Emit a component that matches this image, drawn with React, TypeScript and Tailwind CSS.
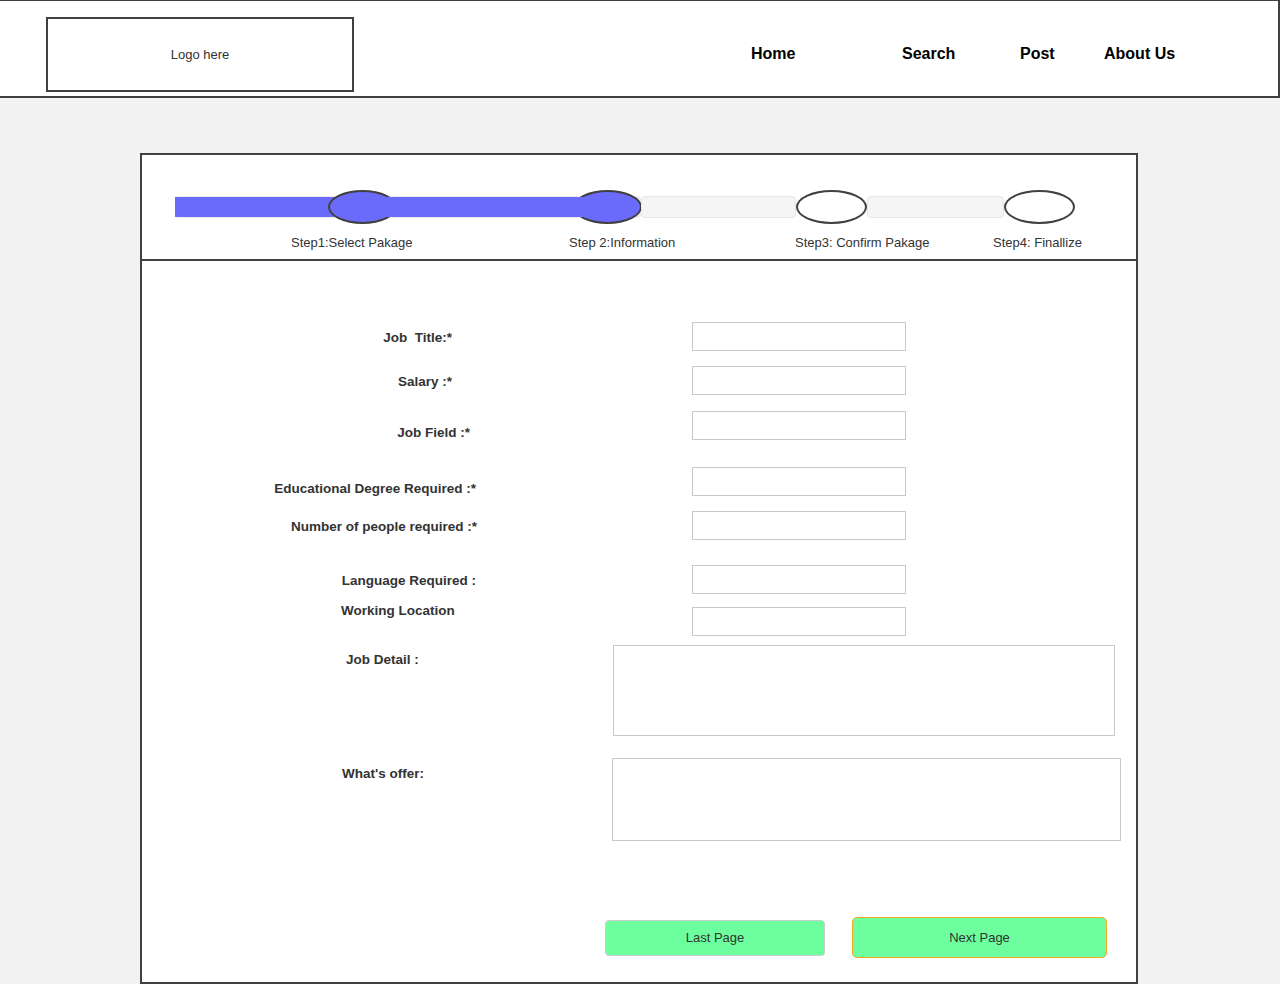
const font = "font-['Liberation_Sans',Arial,sans-serif]";

function InputRow({ top, pr, labelTop, label }: { top: string; pr: string; labelTop: string; label: string }) {
    return (
        <div className={`flex h-[29px] items-start ${top}`}>
            <div className={`w-[550px] shrink-0 text-right ${pr}`}>
                <span className={`block whitespace-pre text-[13.5px] font-bold leading-4 text-[#333] ${labelTop}`}>{label}</span>
            </div>
            <div className="h-[29px] w-[214px] border border-[#c8c8c8] bg-white" />
        </div>
    );
}

export default function App() {
    const steps = [
        { label: 'Step1:Select Pakage', w: 'w-[278px]' },
        { label: 'Step 2:Information', w: 'w-[226px]' },
        { label: 'Step3: Confirm Pakage', w: 'w-[198px]' },
        { label: 'Step4: Finallize', w: 'w-[140px]' },
    ];

    return (
        <div className={`h-[984px] w-[1280px] overflow-hidden bg-[#f2f2f2] ${font}`}>
            {/* Header */}
            <header className="flex h-[98px] items-start border-t border-r-2 border-b-2 border-[#404040] bg-white">
                <div className="mt-[16px] ml-[46px] flex h-[75px] w-[308px] items-center justify-center border-2 border-[#404040]">
                    <span className="text-[13px] text-[#333]">Logo here</span>
                </div>
                <nav className="mt-[44px] ml-[397px] flex items-start text-[16px] leading-[18px] font-bold text-black">
                    <a className="w-[151px]">Home</a>
                    <a className="w-[118px]">Search</a>
                    <a className="w-[84px]">Post</a>
                    <a>About Us</a>
                </nav>
            </header>

            {/* Card */}
            <div className="mt-[55px] ml-[140px] w-[998px] border-2 border-[#404040] bg-white">
                {/* Steps */}
                <div className="h-[106px] border-b-2 border-[#404040] pt-[35px]">
                    <div className="relative h-[34px]">
                        <div className="absolute top-[6px] left-[33px] h-[22px] w-[466px] rounded-sm bg-[#ececec]" />
                        <div className="absolute top-[7px] left-[33px] h-[20px] w-[170px] bg-[#6a6bfb]" />
                        <div className="absolute top-0 left-[186px] h-[34px] w-[69px] rounded-[50%] border-2 border-[#404040] bg-[#6a6bfb]" />
                        <div className="absolute top-0 left-[431px] h-[34px] w-[69px] rounded-[50%] border-2 border-[#404040] bg-[#6a6bfb]" />
                        <div className="absolute top-[7px] left-[220px] h-[20px] w-[245px] bg-[#6a6bfb]" />
                        <div className="absolute top-[6px] left-[499px] h-[22px] w-[155px] rounded-sm border border-[#e6e6e6] bg-[#f5f5f5]" />
                        <div className="absolute top-0 left-[654px] h-[34px] w-[71px] rounded-[50%] border-2 border-[#404040] bg-white" />
                        <div className="absolute top-[6px] left-[725px] h-[22px] w-[137px] rounded-sm border border-[#e6e6e6] bg-[#f5f5f5]" />
                        <div className="absolute top-0 left-[862px] h-[34px] w-[71px] rounded-[50%] border-2 border-[#404040] bg-white" />
                    </div>
                    <div className="mt-[11px] flex pl-[149px] text-[13px] leading-4 text-[#333]">
                        {steps.map((s) => (
                            <span key={s.label} className={`${s.w} shrink-0 whitespace-nowrap`}>{s.label}</span>
                        ))}
                    </div>
                </div>

                {/* Form */}
                <div className="flex flex-col pb-[24px]">
                    <InputRow top="mt-[61px]" pr="pr-[240px]" labelTop="mt-[8px]" label="Job  Title:*" />
                    <InputRow top="mt-[15px]" pr="pr-[240px]" labelTop="mt-[8px]" label="Salary :*" />
                    <InputRow top="mt-[16px]" pr="pr-[222px]" labelTop="mt-[14px]" label="Job Field :*" />
                    <InputRow top="mt-[27px]" pr="pr-[216px]" labelTop="mt-[14px]" label="Educational Degree Required :*" />
                    <InputRow top="mt-[15px]" pr="pr-[215px]" labelTop="mt-[8px]" label="Number of people required :*" />
                    <InputRow top="mt-[25px]" pr="pr-[216px]" labelTop="mt-[8px]" label="Language Required :" />

                    <div className="mt-[13px] flex h-[29px] items-start">
                        <div className="w-[550px] shrink-0 pl-[199px]">
                            <span className="-mt-[4px] block text-[13.5px] font-bold leading-4 text-[#333]">Working Location</span>
                        </div>
                        <div className="h-[29px] w-[214px] border border-[#c8c8c8] bg-white" />
                    </div>

                    <div className="mt-[9px] flex h-[91px] items-start">
                        <div className="w-[471px] shrink-0 pl-[204px]">
                            <span className="mt-[7px] block text-[13.5px] font-bold leading-4 text-[#333]">Job Detail :</span>
                        </div>
                        <div className="h-[91px] w-[502px] border border-[#c8c8c8] bg-white" />
                    </div>

                    <div className="mt-[22px] flex h-[83px] items-start">
                        <div className="w-[470px] shrink-0 pl-[200px]">
                            <span className="mt-[8px] block text-[13.5px] font-bold leading-4 text-[#333]">What's offer:</span>
                        </div>
                        <div className="h-[83px] w-[509px] border border-[#c8c8c8] bg-white" />
                    </div>

                    <div className="mt-[76px] flex h-[41px] items-center">
                        <button className="ml-[463px] h-[36px] w-[220px] rounded-[4px] border border-[#cccccc] bg-[#6dff9d] text-[13px] text-[#333]">
                            Last Page
                        </button>
                        <button className="ml-[27px] h-[41px] w-[255px] rounded-[5px] border border-[#f5a623] bg-[#6dff9d] text-[13px] text-[#333]">
                            Next Page
                        </button>
                    </div>
                </div>
            </div>
        </div>
    );
}
